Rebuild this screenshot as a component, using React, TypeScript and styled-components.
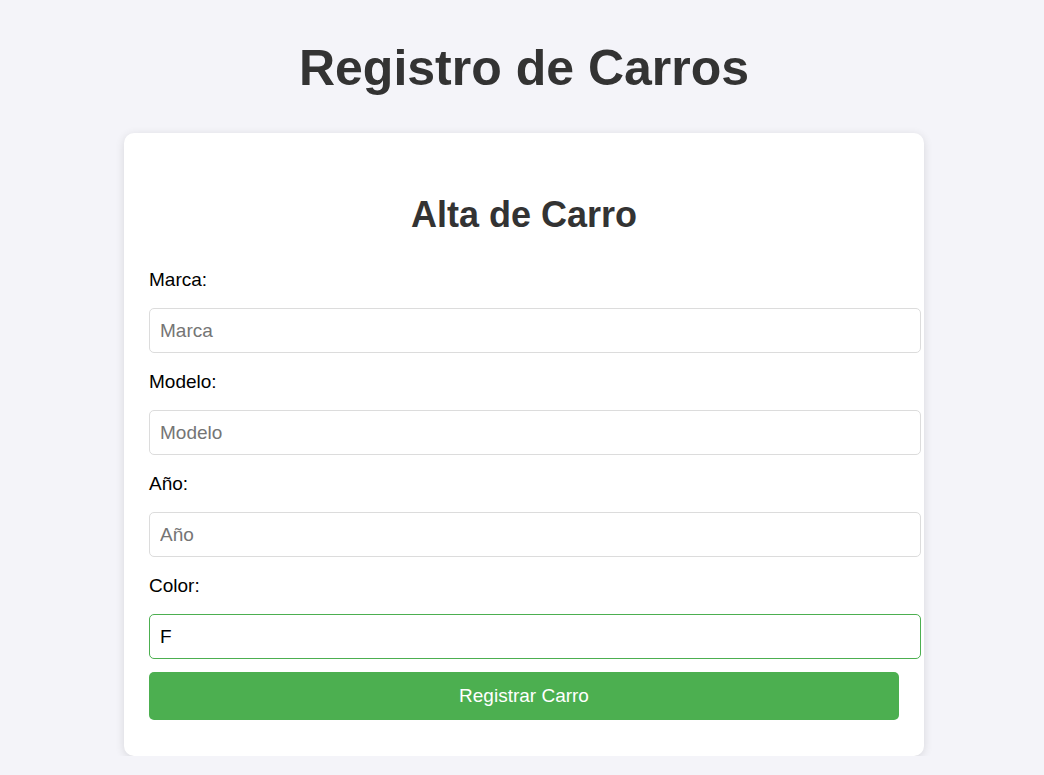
import React from "react";
import styled, { createGlobalStyle } from "styled-components";

const Global = createGlobalStyle`
  html, body { margin: 0; padding: 0; background: #f4f4f9; }
  body { font-family: "Liberation Sans", Arial, sans-serif; color: #000; }
`;

const Page = styled.div`
  display: flex;
  flex-direction: column;
  align-items: center;
  padding: 39px 0 0 4px;
`;

const Title = styled.h1`
  margin: 0 0 36px;
  font-size: 50px;
  line-height: 58px;
  font-weight: 700;
  color: #333;
  text-align: center;
`;

const Card = styled.div`
  width: 750px;
  padding: 25px;
  background: #fff;
  border-radius: 10px;
  box-shadow: 0 2px 10px rgba(0, 0, 0, 0.12);
`;

const CardTitle = styled.h2`
  margin: 36px 0 33px;
  font-size: 36px;
  line-height: 42px;
  font-weight: 700;
  color: #333;
  text-align: center;
`;

const Form = styled.form`
  display: flex;
  flex-direction: column;
`;

const Label = styled.label`
  display: block;
  font-size: 19px;
  line-height: 22px;
  margin-bottom: 17px;
`;

const Input = styled.input<{ $active?: boolean }>`
  display: block;
  box-sizing: content-box;
  width: 100%;
  height: 43px;
  padding: 0 10px;
  margin: 0 0 18px;
  border: 1px solid ${(p) => (p.$active ? "#4caf50" : "#dcdcdc")};
  border-radius: 5px;
  font-family: "Liberation Sans", Arial, sans-serif;
  font-size: 19px;
  color: #000;
  background: #fff;
  outline: none;
  &::placeholder { color: #757575; }
`;

const Button = styled.button`
  display: block;
  width: 100%;
  height: 48px;
  margin: -5px 0 11px;
  border: none;
  border-radius: 5px;
  background: #4caf50;
  color: #fff;
  font-family: "Liberation Sans", Arial, sans-serif;
  font-size: 19px;
  cursor: pointer;
`;

export default function App() {
  return (
    <>
      <Global />
      <Page>
        <Title>Registro de Carros</Title>
        <Card>
          <CardTitle>Alta de Carro</CardTitle>
          <Form onSubmit={(e) => e.preventDefault()}>
            <Label htmlFor="marca">Marca:</Label>
            <Input id="marca" placeholder="Marca" />
            <Label htmlFor="modelo">Modelo:</Label>
            <Input id="modelo" placeholder="Modelo" />
            <Label htmlFor="anio">Año:</Label>
            <Input id="anio" placeholder="Año" />
            <Label htmlFor="color">Color:</Label>
            <Input id="color" placeholder="Color" defaultValue="F" $active autoFocus />
            <Button type="submit">Registrar Carro</Button>
          </Form>
        </Card>
      </Page>
    </>
  );
}
